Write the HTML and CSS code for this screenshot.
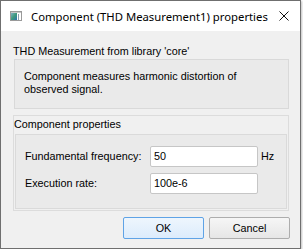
FILE: index.html
```html
<!DOCTYPE html>
<html>
<head>
<meta charset="utf-8">
<link rel="stylesheet" href="styles.css">
</head>
<body>
<div class="window">
  <div class="titlebar">
    <svg class="app-icon" width="12" height="10" viewBox="0 0 12 10">
      <defs>
        <linearGradient id="g" x1="0" y1="0" x2="1" y2="1">
          <stop offset="0" stop-color="#7fb0c8"/>
          <stop offset="0.5" stop-color="#3f9a7a"/>
          <stop offset="1" stop-color="#2d6fb0"/>
        </linearGradient>
      </defs>
      <rect x="0.5" y="0.5" width="11" height="9" fill="#ffffff" stroke="#9a9a9a"/>
      <rect x="1" y="2" width="6" height="7" fill="url(#g)"/>
      <rect x="1" y="1" width="10" height="1" fill="#c8c8c8"/>
      <rect x="8" y="3" width="1" height="6" fill="#8aa0b0"/>
    </svg>
    <span class="title">Component (THD Measurement1) properties</span>
    <svg class="close" width="10" height="10" viewBox="0 0 10 10">
      <path d="M0.5 0.5 L9.5 9.5 M9.5 0.5 L0.5 9.5" stroke="#111" stroke-width="1" fill="none"/>
    </svg>
  </div>
  <div class="client">
    <div class="lib">THD Measurement from library 'core'</div>
    <div class="desc">Component measures harmonic distortion of<br>observed signal.</div>
    <div class="group">
      <div class="group-title">Component properties</div>
      <div class="group-body">
        <div class="row">
          <span class="label">Fundamental frequency:</span>
          <span class="input">50</span>
          <span class="unit">Hz</span>
        </div>
        <div class="row">
          <span class="label">Execution rate:</span>
          <span class="input">100e-6</span>
        </div>
      </div>
    </div>
    <div class="buttons">
      <span class="btn btn-default">OK</span>
      <span class="btn">Cancel</span>
    </div>
  </div>
</div>
</body>
</html>
```
FILE: styles.css
```css
html, body {
  margin: 0;
  padding: 0;
  background: #ffffff;
}
.window {
  width: 299px;
  height: 247px;
  border: 1px solid #6f6f6f;
  background: #f0f0f0;
  box-shadow: 1px 1px 2px rgba(0,0,0,0.25);
  display: flex;
  flex-direction: column;
}
.titlebar {
  height: 30px;
  background: #ffffff;
  display: flex;
  align-items: center;
  font-family: "Noto Sans", sans-serif;
  font-size: 11.3px;
  color: #000;
}
.app-icon {
  margin-left: 9px;
  flex: none;
}
.title {
  margin-left: 9px;
  flex: 1;
  white-space: nowrap;
}
.close {
  flex: none;
  margin-right: 11px;
}
.client {
  flex: 1;
  padding: 0 11px 0 12px;
  font-family: "Liberation Sans", sans-serif;
  font-size: 10.8px;
  line-height: 13px;
  color: #000;
  display: flex;
  flex-direction: column;
}
.lib {
  margin-top: 14px;
  height: 13px;
  white-space: nowrap;
}
.desc {
  margin-top: 1px;
  margin-left: 1px;
  box-sizing: border-box;
  height: 50px;
  border: 1px solid #d9d9d9;
  background: #eaeaea;
  padding: 0 0 2px 9px;
  display: flex;
  flex-direction: column;
  justify-content: center;
}
.group {
  margin-top: 6px;
  height: 96px;
  box-sizing: border-box;
  border: 1px solid #dcdcdc;
  display: flex;
  flex-direction: column;
}
.group-title {
  padding: 2px 0 3px 0;
  height: 13px;
}
.group-body {
  flex: 1;
  margin: 0 1px 1px 1px;
  border: 1px solid #dadada;
  background: #eaeaea;
  padding: 11px 0 0 9px;
  display: flex;
  flex-direction: column;
  gap: 6px;
}
.row {
  display: flex;
  align-items: center;
  height: 21px;
}
.label {
  width: 125px;
}
.input {
  width: 108px;
  height: 21px;
  box-sizing: border-box;
  border: 1px solid #c6c6c6;
  border-radius: 2px;
  background: #ffffff;
  padding-left: 3px;
  display: flex;
  align-items: center;
}
.unit {
  margin-left: 3px;
}
.buttons {
  margin-top: 6px;
  margin-right: -1px;
  display: flex;
  justify-content: flex-end;
  gap: 5px;
}
.btn {
  width: 81px;
  height: 22px;
  box-sizing: border-box;
  border: 1px solid #adadad;
  border-radius: 2px;
  background: linear-gradient(#f6f6f6, #e6e6e6);
  display: flex;
  align-items: center;
  justify-content: center;
}
.btn-default {
  border-color: #5fa3e6;
  background: linear-gradient(#eef6fd, #dcecfc);
}
```
